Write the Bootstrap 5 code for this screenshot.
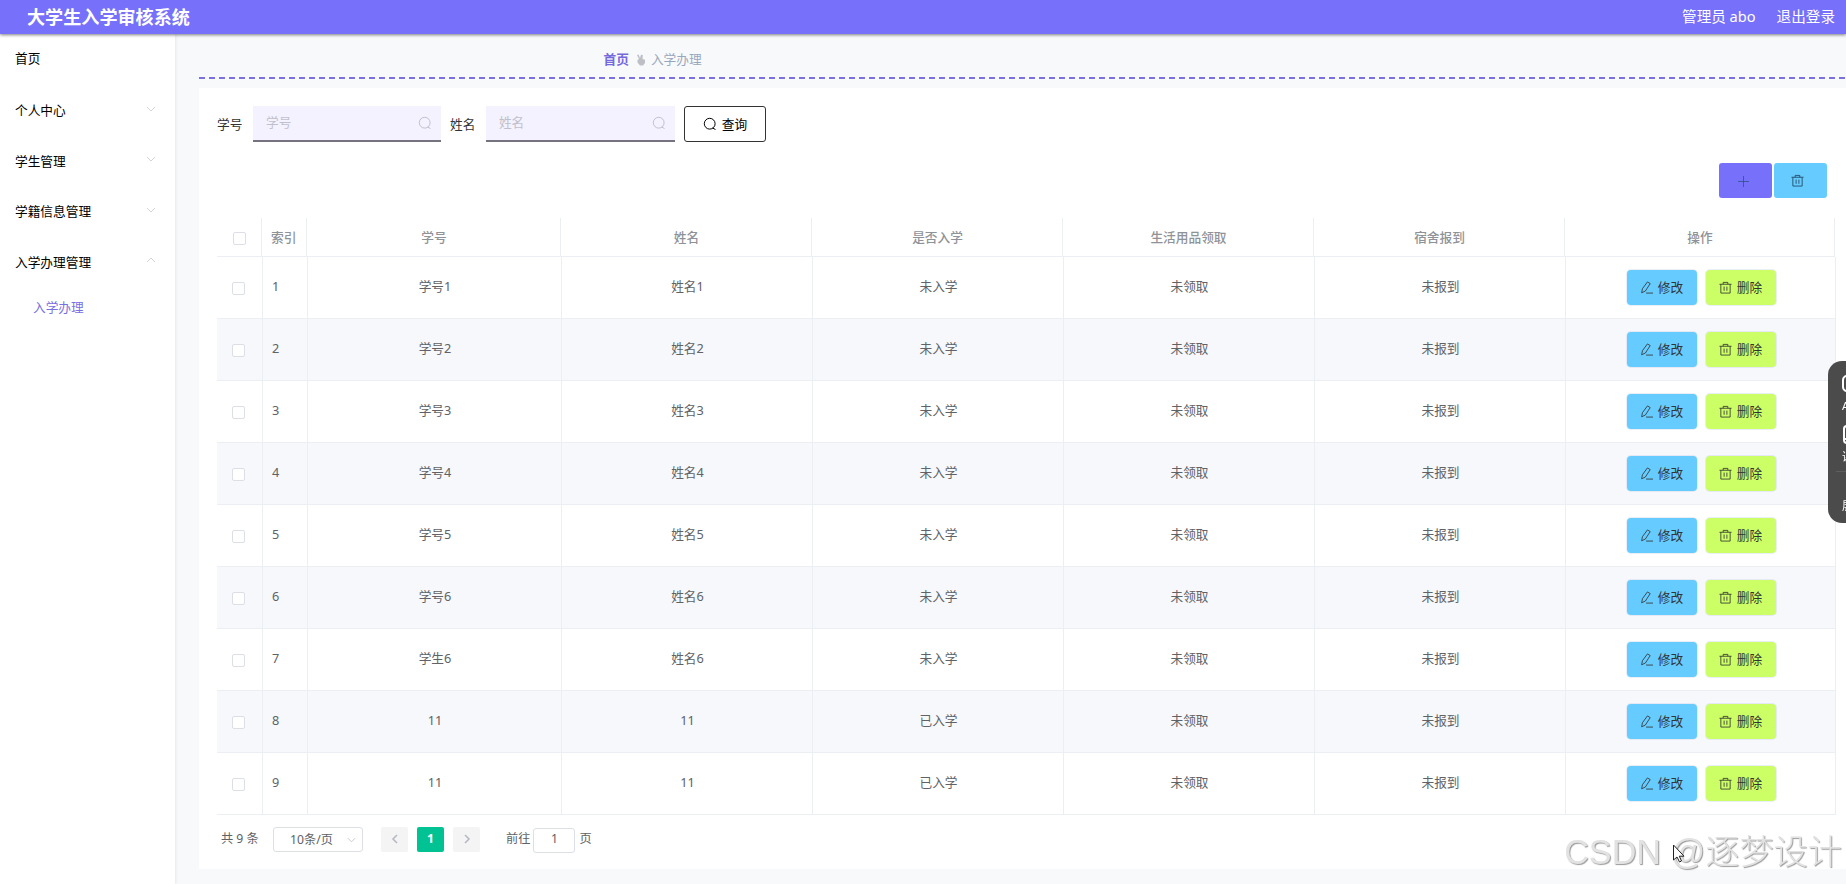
<!DOCTYPE html>
<html lang="zh-CN">
<head>
<meta charset="utf-8">
<title>大学生入学审核系统</title>
<link rel="stylesheet" href="https://cdn.jsdelivr.net/npm/bootstrap@5.3.0/dist/css/bootstrap.min.css">
<style>
body{font-family:"Noto Sans","Noto Sans CJK SC",sans-serif;font-size:12.7px;line-height:20px;color:#606266;height:884px;overflow:hidden;background:#fff}
svg{fill:none;stroke:currentColor;display:block;flex:none}
.topbar{height:34px;background:#7670fa;box-shadow:0 1px 3px rgba(0,0,0,.5);z-index:2;padding:0 11px 2px 27px;color:#fff}
.topbar h1{font-size:18.1px;line-height:32px;padding-top:1px}
.topbar .links{font-size:14.6px;gap:21px;margin-top:-1px}
.side{width:175px;color:#000;box-shadow:1px 0 3px rgba(0,0,0,.07);z-index:1;padding-top:14px;background:#fff}
.side .item{height:20px;margin-bottom:30.5px;padding:0 19px 0 15px}
.side .item svg{color:#d4d4d4;margin-top:-3px}
.side .sub{padding-left:33px;color:#7670e0;margin-top:-5px}
.main{background:#f8f9fb;padding-left:24px}
.crumbs{height:43px;padding:15px 0 0 404.500px;color:#97a8be}
.crumbs b{color:#7569dd;font-weight:600}
.dash{height:2px;background:repeating-linear-gradient(90deg,#7b70dc 0 6px,transparent 6px 10px)}
.panel{background:#fff;margin-top:9px;height:781px;padding:18px 10px 0 18px}
.search{height:36px;color:#333}
.search>span{margin-top:-1px}
.field{height:36px;background:#f4f2ff;border-bottom:2px solid #77727f;color:#c0c0cb;padding:0 9px 3px 13px;margin:0 9px 0 10.600px}
.field svg{margin-top:2px}
.query{width:82px;height:36px;border:1px solid #333;border-radius:3px;color:#000;gap:5px;padding-bottom:1px}
.tools{margin:21px 9px 0 0;gap:2px}
.tool{width:53px;height:35px;border-radius:3px;color:#24506e;padding-right:6px}
.violet{background:#7670fa}.sky{background:#66ccff}.lime{background:#ccff66}
.grid{table-layout:fixed;border-collapse:separate;border-spacing:0}
.grid td,.grid th{border-right:1px solid #ebeef2;border-bottom:1px solid #ebeef2;padding:0 0 0 1px;text-align:center}
.grid th{height:39px;color:#8f9297;font-weight:500}
.grid td{height:62px;padding-bottom:3px}
.grid td.idx,.grid th.idx{text-align:left;padding-left:9px}
.grid tr:nth-child(even) td{background:#f6f8fc}
.tick{width:13px;height:13px;border:1px solid #dcdfe6;border-radius:2px;background:#fff;margin:4px auto 0 14px}
th .tick{margin:2px auto 0 15px}
.act{width:70px;height:35px;border-radius:4px;color:#333;gap:5px;box-shadow:0 0 0 1px rgba(195,205,225,.35);padding:0 1px 1px 0}
.acts{gap:9px;padding:3px 0 0 1px}
.pager{font-size:12.200px;margin-top:11px;height:26px;padding-left:4px}
.box{height:25px;border:1px solid #dcdfe6;border-radius:3px}
.pg{width:27px;height:25px;background:#f4f4f5;border-radius:2px;color:#b4b8c0;margin-right:9px}
.pg.on{background:#00c292;color:#fff;font-weight:700}
.dock{position:fixed;right:0;top:361px;width:18px;height:162px;border-radius:14px 0 0 14px;background:rgba(68,68,68,.96);color:#fff;overflow:hidden;font-size:11px;line-height:14px;padding-left:14px}
.dock i{font-style:normal;display:block;width:14px;white-space:nowrap}
.dock hr{margin:7px 0 0 -6px;border-color:#999;width:12px}
.wm{position:fixed;right:4px;top:828px;font:300 34.200px/48px "Liberation Sans","Noto Sans CJK SC",sans-serif;color:#e2e2e2;text-shadow:1px 1px 1px #999;white-space:nowrap}
.ptr{position:fixed;left:1672px;top:844px}
</style>
<script src="https://cdn.jsdelivr.net/npm/bootstrap@5.3.0/dist/js/bootstrap.bundle.min.js"></script>
</head>
<body class="d-flex flex-column">
<svg width="0" height="0" class="position-absolute"><defs>
<linearGradient id="dockblue" x1="0" y1="0" x2="0" y2="1"><stop stop-color="#5cc8f5"/><stop offset="1" stop-color="#7a8cff"/></linearGradient>
<symbol id="search" viewBox="0 0 14 14"><circle cx="6.700" cy="6.700" r="5.400"/><path d="M9.500 11l3 1.500"/></symbol>
<symbol id="trash" viewBox="0 0 14 14"><path d="M.5 3.500h13M4.500 3.500v-2h5v2M2 3.500v9.500h10V3.500M5.500 6v4.500M8.500 6v4.500"/></symbol>
<symbol id="edit" viewBox="0 0 14 14"><path d="M8 1l3 1.800-5.200 8-4 1.900.8-4.400zM6.500 13H14"/></symbol>
<symbol id="down" viewBox="0 0 10 6"><path d="M1 1l4 4 4-4"/></symbol>
<symbol id="up" viewBox="0 0 10 6"><path d="M1 5l4-4 4 4"/></symbol>
</defs></svg>
<header class="topbar d-flex align-items-center justify-content-between position-relative flex-shrink-0">
<h1 class="m-0 fw-bold">大学生入学审核系统</h1>
<div class="links d-flex"><span>管理员 abo</span><span>退出登录</span></div>
</header>
<div class="d-flex flex-grow-1">
<nav class="side flex-shrink-0 position-relative">
<div class="item d-flex" style="margin-bottom:32px">首页</div>
<div class="item d-flex justify-content-between align-items-center">个人中心<svg width="10" height="6"><use href="#down"/></svg></div>
<div class="item d-flex justify-content-between align-items-center">学生管理<svg width="10" height="6"><use href="#down"/></svg></div>
<div class="item d-flex justify-content-between align-items-center">学籍信息管理<svg width="10" height="6"><use href="#down"/></svg></div>
<div class="item d-flex justify-content-between align-items-center">入学办理管理<svg width="10" height="6"><use href="#up"/></svg></div>
<div class="sub">入学办理</div>
</nav>
<main class="main flex-grow-1">
<div class="crumbs d-flex"><b>首页</b><svg width="10" height="12" viewBox="0 0 10 12" style="margin:5px 5px 0 7px"><path fill="#bdbfc5" stroke="none" d="M1 1l1.500-.5L4 4 5 .8l1.800.2L6.500 5l2.500.7V9L7 11.500H4L1.500 8.500V6L3 5z"/></svg><span>入学办理</span></div>
<div class="dash"></div>
<section class="panel">
<div class="search d-flex align-items-center">
<span>学号</span><div class="field d-flex align-items-center justify-content-between" style="width:188px">学号<svg width="14" height="14"><use href="#search"/></svg></div>
<span>姓名</span><div class="field d-flex align-items-center justify-content-between" style="width:189px">姓名<svg width="14" height="14"><use href="#search"/></svg></div>
<div class="query d-flex align-items-center justify-content-center"><svg width="14" height="14"><use href="#search"/></svg>查询</div>
</div>
<div class="tools d-flex justify-content-end">
<div class="tool violet d-flex align-items-center justify-content-center"><svg width="12" height="12" stroke-width=".7"><path d="M6.500 1v11M1 6.500h11"/></svg></div>
<div class="tool sky d-flex align-items-center justify-content-center"><svg width="13" height="13"><use href="#trash"/></svg></div>
</div>
<table class="grid" style="width:1618px;margin-top:20px"><colgroup><col style="width:45px"><col style="width:45px"><col style="width:254px"><col style="width:251px"><col style="width:251px"><col style="width:251px"><col style="width:251px"><col style="width:270px"></colgroup>
<thead><tr><th><div class="tick"></div></th><th class="idx">索引</th><th>学号</th><th>姓名</th><th>是否入学</th><th>生活用品领取</th><th>宿舍报到</th><th>操作</th></tr></thead></table>
<table class="grid" style="width:1619px"><colgroup><col style="width:46px"><col style="width:45px"><col style="width:254px"><col style="width:251px"><col style="width:251px"><col style="width:251px"><col style="width:251px"><col style="width:270px"></colgroup>
<tbody id="rows"></tbody></table>
<div class="pager d-flex align-items-center">
<span style="width:52px">共 9 条</span>
<div class="box d-flex align-items-center justify-content-between" style="width:90px;padding:2px 6px 0 16px;margin-right:18px">10条/页<svg width="9" height="6" color="#c0c4cc"><use href="#down"/></svg></div>
<div class="pg d-flex align-items-center justify-content-center"><svg width="8" height="10" stroke-width="1.500"><path d="M6 1L2 5l4 4"/></svg></div>
<div class="pg on d-flex align-items-center justify-content-center">1</div>
<div class="pg d-flex align-items-center justify-content-center"><svg width="8" height="10" stroke-width="1.500"><path d="M2 1l4 4-4 4"/></svg></div>
<span style="margin-left:17px">前往</span><div class="box text-center" style="width:42px;margin:2px 4px 0 3px">1</div>页
</div>
</section>
</main>
</div>
<aside class="dock"><svg width="14" height="20" style="margin-top:13px" stroke="url(#dockblue)" stroke-width="2"><rect x="1" y="2" width="20" height="15" rx="4"/></svg><i style="margin-top:5px">AI</i><svg width="14" height="22" style="margin-top:11px" stroke-width="2"><rect x="2" y="2" width="18" height="17" rx="3"/><path d="M2 15h12"/></svg><i style="margin-top:4px">课程</i><hr><i style="margin-top:27px">展开</i></aside>
<div class="wm">CSDN @逐梦设计</div>
<svg class="ptr" width="14" height="20"><path fill="#fff" stroke="#222" d="M1.500 1v15l3.500-3 2.500 5 2-1-2.200-4.800H12z"/></svg>
<script>
const data=[["学号1","姓名1","未入学"],["学号2","姓名2","未入学"],["学号3","姓名3","未入学"],["学号4","姓名4","未入学"],["学号5","姓名5","未入学"],["学号6","姓名6","未入学"],["学生6","姓名6","未入学"],["11","11","已入学"],["11","11","已入学"]];
document.getElementById("rows").innerHTML=data.map((r,i)=>`<tr><td><div class="tick"></div></td><td class="idx">${i+1}</td>${r.map(c=>`<td>${c}</td>`).join("")}<td>未领取</td><td>未报到</td><td><div class="acts d-flex justify-content-center"><div class="act sky d-flex align-items-center justify-content-center"><svg width="13" height="13" stroke-width=".9"><use href="#edit"/></svg>修改</div><div class="act lime d-flex align-items-center justify-content-center"><svg width="13" height="13" stroke-width=".9"><use href="#trash"/></svg>删除</div></div></td></tr>`).join("");
</script>
</body>
</html>
